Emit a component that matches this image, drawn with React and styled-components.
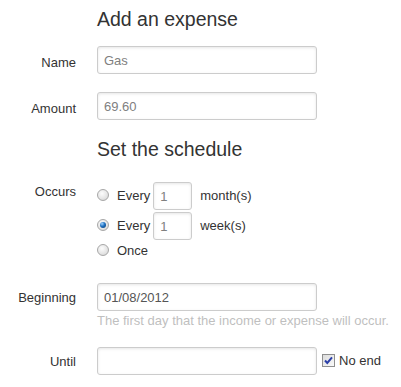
import React from "react";
import styled, { createGlobalStyle } from "styled-components";

const Global = createGlobalStyle`
  body {
    margin: 0;
    background: #fff;
    font-family: "Liberation Sans", Arial, sans-serif;
    font-size: 13px;
    line-height: 18px;
    color: #333;
  }
`;

const Form = styled.form`
  display: flex;
  flex-direction: column;
`;

const Legend = styled.h3`
  margin: ${({ $mt }) => $mt}px 0 0 97px;
  font-size: 19.5px;
  line-height: 30px;
  font-weight: normal;
  color: #333;
`;

const Row = styled.div`
  display: grid;
  grid-template-columns: 76px auto;
  column-gap: 21px;
  align-items: start;
  margin-top: ${({ $mt }) => $mt}px;
`;

const Label = styled.label`
  text-align: right;
  line-height: 18px;
  padding-top: ${({ $pt }) => $pt}px;
  color: #333;
`;

const Controls = styled.div`
  display: flex;
  flex-direction: column;
`;

const TextInput = styled.input`
  box-sizing: border-box;
  width: ${({ $w }) => $w || 220}px;
  height: 28px;
  margin: 0;
  padding: 4px 6px;
  border: 1px solid #ccc;
  border-radius: 3px;
  box-shadow: inset 0 1px 3px rgba(0, 0, 0, 0.1);
  font-family: inherit;
  font-size: 13px;
  line-height: 18px;
  color: ${({ $dark }) => ($dark ? "#555" : "#808080")};
  background: #fff;
  outline: none;
`;

const Help = styled.span`
  margin-top: 1px;
  line-height: 18px;
  color: #bfbfbf;
  white-space: nowrap;
`;

const RadioList = styled.div`
  display: flex;
  flex-direction: column;
  gap: 2px;
`;

const RadioLine = styled.label`
  display: flex;
  align-items: center;
  height: ${({ $h }) => $h}px;
  white-space: nowrap;
`;

const Radio = styled.span`
  box-sizing: border-box;
  width: 12px;
  height: 12px;
  margin: 0 8px -1px 0;
  border-radius: 50%;
  border: 1px solid #a7a7a7;
  background: radial-gradient(circle at 40% 35%, #fcfcfc 0%, #e6e6e6 55%, #cfcfcf 100%);
  display: flex;
  align-items: center;
  justify-content: center;
  position: relative;
  top: -2px;

  &::after {
    content: "";
    display: ${({ $on }) => ($on ? "block" : "none")};
    width: 6px;
    height: 6px;
    border-radius: 50%;
    background: radial-gradient(circle at 35% 30%, #9fd3ff 0%, #1d6fc0 45%, #0b3b6e 100%);
  }
`;

const Unit = styled.span`
  margin-left: ${({ $ml }) => $ml}px;
`;

const Inline = styled.div`
  display: flex;
  align-items: center;
`;

const CheckBox = styled.span`
  box-sizing: border-box;
  width: 13px;
  height: 13px;
  margin: 0 4px 0 5px;
  border: 1px solid #8f8f8f;
  background: linear-gradient(135deg, #dcdcdc, #fafafa);
  display: flex;
  align-items: center;
  justify-content: center;
  position: relative;
  top: -1px;
`;

function Check() {
  return (
    <svg width="11" height="11" viewBox="0 0 11 11">
      <path d="M2 5.5 L4.3 8 L9 2.3" fill="none" stroke="#2b3fa8" strokeWidth="2" />
    </svg>
  );
}

export default function App() {
  return (
    <>
      <Global />
      <Form>
        <Legend $mt={4}>Add an expense</Legend>
        <Row $mt={12}>
          <Label $pt={8}>Name</Label>
          <Controls>
            <TextInput defaultValue="Gas" />
          </Controls>
        </Row>
        <Row $mt={18}>
          <Label $pt={8}>Amount</Label>
          <Controls>
            <TextInput defaultValue="69.60" />
          </Controls>
        </Row>

        <Legend $mt={14}>Set the schedule</Legend>
        <Row $mt={18}>
          <Label $pt={1}>Occurs</Label>
          <RadioList>
            <RadioLine $h={28}>
              <Radio />
              Every
              <Unit $ml={3}><TextInput $w={39} defaultValue="1" /></Unit>
              <Unit $ml={8}>month(s)</Unit>
            </RadioLine>
            <RadioLine $h={28}>
              <Radio $on />
              Every
              <Unit $ml={3}><TextInput $w={39} defaultValue="1" /></Unit>
              <Unit $ml={8}>week(s)</Unit>
            </RadioLine>
            <RadioLine $h={18}>
              <Radio />
              Once
            </RadioLine>
          </RadioList>
        </Row>

        <Row $mt={23}>
          <Label $pt={6}>Beginning</Label>
          <Controls>
            <TextInput $dark defaultValue="01/08/2012" />
            <Help>The first day that the income or expense will occur.</Help>
          </Controls>
        </Row>
        <Row $mt={17}>
          <Label $pt={6}>Until</Label>
          <Inline>
            <TextInput />
            <CheckBox><Check /></CheckBox>
            No end
          </Inline>
        </Row>
      </Form>
    </>
  );
}
